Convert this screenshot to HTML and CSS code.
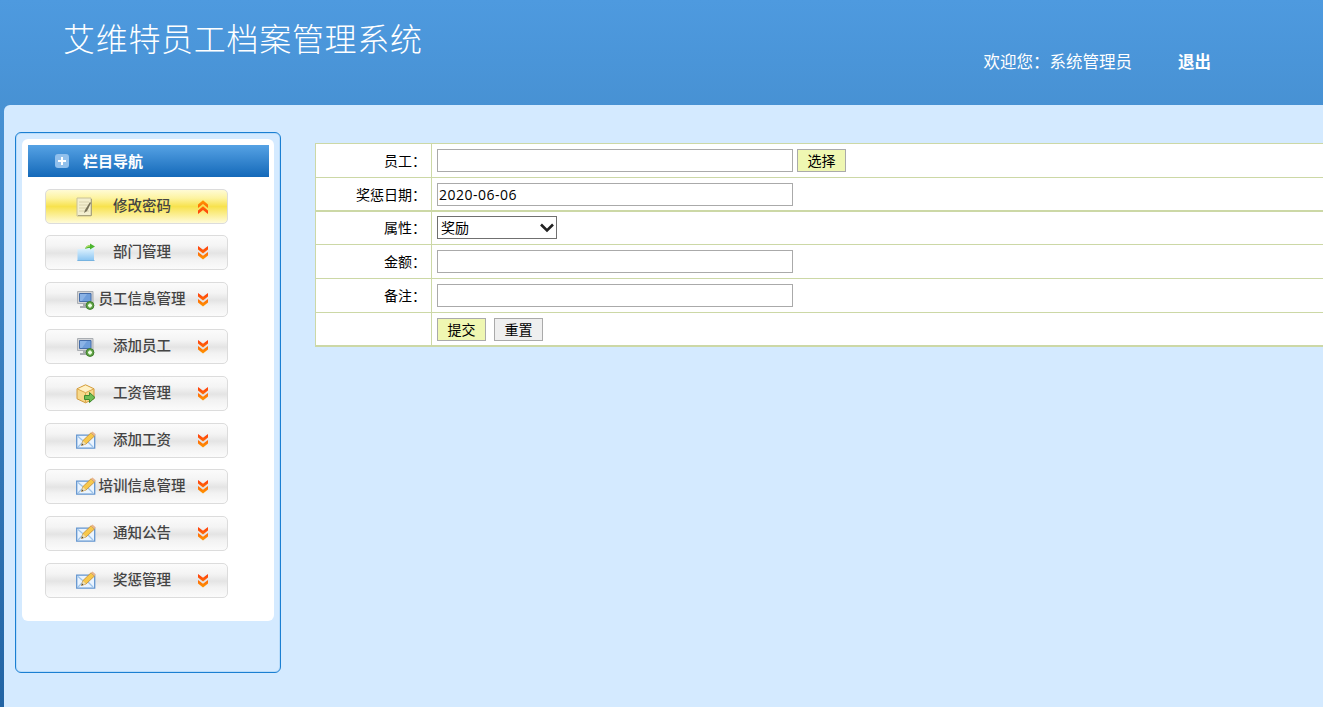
FILE: index.html
```html
<!DOCTYPE html>
<html lang="zh-CN">
<head>
    <meta charset="UTF-8">
    <title>艾维特员工档案管理系统</title>
    <link rel="stylesheet" href="styles.css">
</head>
<body>

<svg class="defs" width="0" height="0">
    <defs>
        <linearGradient id="folder-fill" x1="0" y1="0" x2="0" y2="1">
            <stop offset="0" stop-color="#e6f6ff"/>
            <stop offset="1" stop-color="#86c3f2"/>
        </linearGradient>
        <linearGradient id="arrow-fill" x1="0" y1="0" x2="0" y2="1">
            <stop offset="0" stop-color="#ff3a0c"/>
            <stop offset="1" stop-color="#ff9a00"/>
        </linearGradient>
        <linearGradient id="arrow-fill-up" x1="0" y1="0" x2="0" y2="1">
            <stop offset="0" stop-color="#ff9a00"/>
            <stop offset="1" stop-color="#ff3a0c"/>
        </linearGradient>
    </defs>
    <symbol id="icon-note" viewBox="0 0 20 20">
        <path d="M1 1h14v18H1z" fill="#f3efcf" stroke="#c9c29a"/>
        <path d="M3 5h10M3 8h10M3 11h10M3 14h10" stroke="#d8d2ae"/>
        <path d="M2 18.500h13.500V2" fill="none" stroke="#aaa47c"/>
        <path d="M14 5l-5 8-1 3 3-2 4-8z" fill="#777258"/>
    </symbol>
    <symbol id="icon-folder" viewBox="0 0 20 20">
        <path d="M1.500 6h6l2-1.500H18V18H1.500z" fill="url(#folder-fill)"/>
        <path d="M1.500 17.500H18.500" stroke="#76b3e0"/>
        <path d="M9 6c1-3 3-4 5-4V.5l5 3-5 3V5c-2 0-3 0-5 1z" fill="#4db52f"/>
        <path d="M9 6c1-3 3-4 5-4v1.500c-2 0-4 1-5 2.500z" fill="#b3dd68"/>
    </symbol>
    <symbol id="icon-computer" viewBox="0 0 20 20">
        <path d="M1.500 1.500h15.500v12H1.500z" fill="#d5d6d8" stroke="#aaaeb3"/>
        <path d="M3.500 3.500h11.500v8H3.500z" fill="#6f9edb" stroke="#446ca8"/>
        <path d="M4 4h7l-5 7H4z" fill="#8bb3e6"/>
        <path d="M7 14h5v2h2v2H4v-2h3z" fill="#a9acb0"/>
        <circle cx="14" cy="15.500" r="3.900" fill="#62a447" stroke="#3f7e2c"/>
        <path d="M14 13.500v4M12 15.500h4" stroke="#f0ffe6" stroke-width="1.800"/>
    </symbol>
    <symbol id="icon-box" viewBox="0 0 20 20">
        <path d="M9.500.8l8.500 4v10l-8.500 4-8.500-4v-10z" fill="#f7d98a" stroke="#d29a3b"/>
        <path d="M9.500 1.500L17 5l-7.500 3.500L2 5z" fill="#fff1c5"/>
        <path d="M1.500 5l8 3.700 8-3.700M9.500 9v9.500" fill="none" stroke="#dba74c"/>
        <path d="M8.500 11.500h5V8.500l5.500 5-5.500 5v-3h-5z" fill="#70bd54" stroke="#3e8a2f"/>
    </symbol>
    <symbol id="icon-mail" viewBox="0 0 20 20">
        <path d="M.7 4.200h18v13H.7z" fill="#eaf4ff" stroke="#6395cf" stroke-width="1.300"/>
        <path d="M2 5.500l7.500 6.500 7.500-6.500M2 16l5.500-5.500M17 16l-5-5" fill="none" stroke="#9dc3ea" stroke-width="1.300"/>
        <path d="M5.500 14.500l1.500-5L15 1.800l3.500 3.200-8.500 8z" fill="#f7c84c" stroke="#c18a36" stroke-width=".8"/>
        <path d="M15 1.800l1.500-1.300 3.200 2.800-1.200 1.700z" fill="#e8b48c"/>
        <path d="M5.500 14.500l1.500-4.500 3 3z" fill="#eee0b8"/>
        <path d="M5.500 14.500l.7-2 1.300 1.300z" fill="#444"/>
    </symbol>
    <symbol id="icon-down" viewBox="0 0 10 14">
        <path d="M0 0l5 3.800L10 0v3.400L5 7.500 0 3.400zM0 6l5 3.800L10 6v3.400l-5 4.200L0 9.400z" fill="url(#arrow-fill)"/>
    </symbol>
    <symbol id="icon-up" viewBox="0 0 10 14">
        <path d="M5 .3l5 4.200v3.400L5 4.100 0 7.900V4.500zM5 6.300l5 4.200v3.400l-5-3.800-5 3.800v-3.400z" fill="url(#arrow-fill-up)"/>
    </symbol>
</svg>

<div class="header">
    <h1>艾维特员工档案管理系统</h1>
    <div class="user">
        <span>欢迎您：系统管理员</span>
        <a class="logout">退出</a>
    </div>
</div>

<div class="main">
    <div class="sidebar">
        <div class="nav">
            <div class="nav-title">
                <svg width="14" height="14" viewBox="0 0 14 14"><rect width="14" height="14" rx="3" fill="#91c0ec"/><path d="M7 3v8M3 7h8" stroke="#fff" stroke-width="2"/></svg>
                <span>栏目导航</span>
            </div>
            <ul>
                <li class="active"><svg class="icon"><use href="#icon-note"/></svg><span>修改密码</span><svg class="arrow"><use href="#icon-up"/></svg></li>
                <li><svg class="icon"><use href="#icon-folder"/></svg><span>部门管理</span><svg class="arrow"><use href="#icon-down"/></svg></li>
                <li><svg class="icon"><use href="#icon-computer"/></svg><span>员工信息管理</span><svg class="arrow"><use href="#icon-down"/></svg></li>
                <li><svg class="icon"><use href="#icon-computer"/></svg><span>添加员工</span><svg class="arrow"><use href="#icon-down"/></svg></li>
                <li><svg class="icon"><use href="#icon-box"/></svg><span>工资管理</span><svg class="arrow"><use href="#icon-down"/></svg></li>
                <li><svg class="icon"><use href="#icon-mail"/></svg><span>添加工资</span><svg class="arrow"><use href="#icon-down"/></svg></li>
                <li><svg class="icon"><use href="#icon-mail"/></svg><span>培训信息管理</span><svg class="arrow"><use href="#icon-down"/></svg></li>
                <li><svg class="icon"><use href="#icon-mail"/></svg><span>通知公告</span><svg class="arrow"><use href="#icon-down"/></svg></li>
                <li><svg class="icon"><use href="#icon-mail"/></svg><span>奖惩管理</span><svg class="arrow"><use href="#icon-down"/></svg></li>
            </ul>
        </div>
    </div>

    <form class="reward-form">
        <div class="row">
            <label for="employee">员工：</label>
            <div class="field">
                <input type="text" id="employee" name="employee">
                <button type="button" class="btn primary">选择</button>
            </div>
        </div>
        <div class="row thick">
            <label for="date">奖惩日期：</label>
            <div class="field"><input type="text" id="date" name="date" value="2020-06-06"></div>
        </div>
        <div class="row">
            <label for="type">属性：</label>
            <div class="field">
                <div class="select">
                    <select id="type" name="type">
                        <option>奖励</option>
                        <option>惩罚</option>
                    </select>
                    <svg width="14" height="10" viewBox="0 0 14 10"><path d="M1 1.500l6 6 6-6" fill="none" stroke="#222" stroke-width="2.600"/></svg>
                </div>
            </div>
        </div>
        <div class="row">
            <label for="amount">金额：</label>
            <div class="field"><input type="text" id="amount" name="amount"></div>
        </div>
        <div class="row">
            <label for="remark">备注：</label>
            <div class="field"><input type="text" id="remark" name="remark"></div>
        </div>
        <div class="row thick">
            <label></label>
            <div class="field buttons">
                <button type="button" class="btn primary">提交</button>
                <button type="reset" class="btn">重置</button>
            </div>
        </div>
    </form>
</div>

</body>
</html>
```

FILE: styles.css
```css
* {
    box-sizing: border-box;
}

body {
    margin: 0;
    height: 707px;
    overflow: hidden;
    display: flex;
    flex-direction: column;
    font-family: "Open Sans", "Noto Sans CJK SC", sans-serif;
    font-size: 14px;
    color: #000;
    background: linear-gradient(#4e9adf 0, #4791d3 110px, #2264a4 707px);
}

.defs {
    position: absolute;
}

.header {
    height: 105px;
    flex: none;
    display: flex;
    justify-content: space-between;
    padding: 0 112px 0 63px;
    color: #fff;
}

h1 {
    margin: 13px 0 0;
    font-family: "Noto Sans CJK SC", sans-serif;
    font-size: 32px;
    font-weight: 300;
    line-height: 48px;
    letter-spacing: 0.7px;
}

.user {
    display: flex;
    gap: 46px;
    margin-top: 49px;
    font-family: "Noto Sans CJK SC", sans-serif;
    font-size: 16.5px;
    line-height: 24px;
}

.logout {
    font-weight: bold;
}

.main {
    flex: 1;
    display: flex;
    align-items: flex-start;
    margin-left: 4px;
    padding: 27px 0 0 11px;
    background: #d4eaff;
    border-top-left-radius: 6px;
}

.sidebar {
    width: 266px;
    height: 541px;
    flex: none;
    padding: 6px;
    border: 1px solid #1a7fd2;
    border-radius: 6px;
    box-shadow: inset 0 0 0 1px #b9dcfa;
}

.nav {
    width: 252px;
    height: 482px;
    padding: 6px;
    background: #fff;
    border-radius: 6px;
}

.nav-title {
    display: flex;
    align-items: center;
    gap: 14px;
    width: 241px;
    height: 32px;
    padding-left: 27px;
    color: #fff;
    font-size: 15px;
    font-weight: bold;
    background: linear-gradient(#56a2e4, #1469b9);
}

.nav-title span {
    padding-bottom: 2px;
}

ul {
    list-style: none;
    display: flex;
    flex-direction: column;
    gap: 11.8px;
    margin: 11.6px 0 0 17px;
    padding: 0;
}

li {
    display: grid;
    grid-template-columns: 20px 90px 11px;
    column-gap: 1px;
    align-items: center;
    width: 183px;
    height: 35px;
    padding-left: 30px;
    color: #444;
    font-size: 14.5px;
    font-weight: 500;
    text-align: center;
    white-space: nowrap;
    border: 1px solid #dcdcdc;
    border-radius: 5px;
    background: linear-gradient(#fbfbfb, #f4f4f4 30%, #e4e4e4 52%, #f2f2f2 70%, #fbfbfb);
}

li span {
    line-height: 20px;
    padding-bottom: 1px;
}

.active {
    background: linear-gradient(#fffbd5, #fdf3a0 25%, #f7e24e 50%, #fbec85 70%, #fffbd8);
}

.icon {
    width: 20px;
    height: 20px;
    margin-top: 1px;
}

.arrow {
    width: 10px;
    height: 14px;
    margin: 1px 0 0 10px;
}

.reward-form {
    flex: 1;
    margin: 11px 0 0 34px;
    background: #fff;
    border-top: 1px solid #ccd8a6;
    border-left: 1px solid #ccd8a6;
}

.row {
    display: flex;
    height: 34px;
    border-bottom: 1px solid #ccd8a6;
}

.row.thick {
    border-bottom-width: 2px;
}

.row.thick + .row {
    height: 33px;
}

label {
    width: 116px;
    padding-right: 5px;
    line-height: 33px;
    text-align: right;
    border-right: 1px solid #ccd8a6;
}

.thick + .row label {
    line-height: 31px;
}

.field {
    display: flex;
    align-items: flex-start;
    gap: 4px;
    padding: 5px;
}

.thick + .row .field {
    padding-top: 4px;
}

.buttons {
    gap: 8px;
}

input,
select,
.btn {
    height: 23px;
    border: 1px solid #aaa;
    border-radius: 0;
    font-family: inherit;
    font-size: 14px;
    color: #000;
}

input {
    width: 356px;
    padding: 0 1px;
    letter-spacing: 0.5px;
    background: #fff;
}

.select {
    display: grid;
    width: 120px;
}

.select select,
.select svg {
    grid-area: 1 / 1;
}

.select svg {
    justify-self: end;
    align-self: center;
    margin-right: 3px;
    pointer-events: none;
}

select {
    appearance: none;
    padding: 0 3px;
    border-color: #707070;
    background: #fff;
}

.btn {
    width: 49px;
    padding: 0;
    line-height: 20px;
    background: #efefef;
}

.btn.primary {
    background: #eff7b2;
}
```
